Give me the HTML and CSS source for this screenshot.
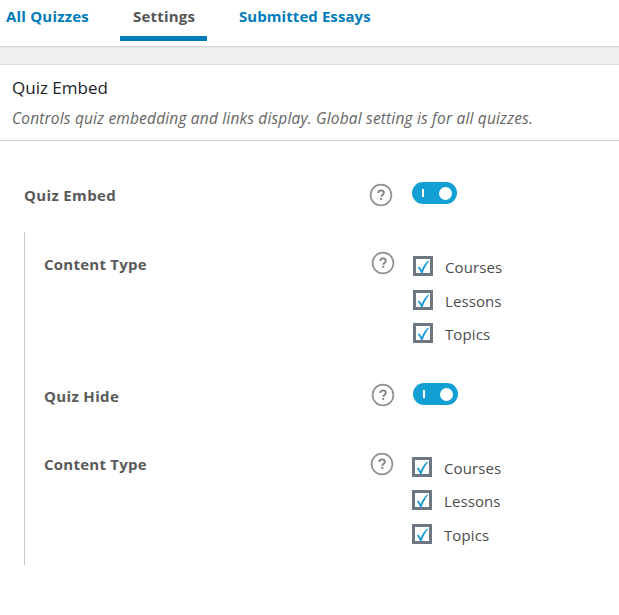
FILE: index.html
```html
<!DOCTYPE html>
<html lang="en">
<head>
<meta charset="utf-8">
<title>Quiz Settings</title>
<link rel="stylesheet" href="styles.css">
</head>
<body>
<svg class="defs" width="0" height="0" aria-hidden="true">
  <symbol id="help" viewBox="0 0 24 24">
    <circle cx="12" cy="12" r="10.400" fill="none" stroke="#929292" stroke-width="1.700"/>
    <path d="M9.300 10C9.300 8.300 10.400 7.400 12 7.400s2.800 1 2.800 2.500c0 1.900-2.600 2.100-2.600 3.900" fill="none" stroke="#858585" stroke-width="1.900"/>
    <rect x="11.200" y="14.900" width="2" height="2" fill="#858585"/>
  </symbol>
  <symbol id="check" viewBox="0 0 20 20">
    <path d="M4.800 11.500l1.800-1 2 3.500C10.200 10.100 12.500 6.900 15 4.700h1.200C13.500 8.200 11.300 12.200 9.600 17H8.100C7.200 14.900 6.200 13.100 4.800 11.500z" fill="#1b9ad8"/>
  </symbol>
</svg>
<nav class="tabs">
  <a class="tab all"><span>All Quizzes</span></a>
  <a class="tab active"><span>Settings</span></a>
  <a class="tab essays"><span>Submitted Essays</span></a>
</nav>
<main class="panel">
  <header class="panel-head">
    <h2><span>Quiz Embed</span></h2>
    <p><span>Controls quiz embedding and links display. Global setting is for all quizzes.</span></p>
  </header>
  <section class="row main-row">
    <div class="label"><span>Quiz Embed</span></div>
    <svg class="help"><use href="#help"/></svg>
    <div class="toggle"><i></i><b></b></div>
  </section>
  <div class="group">
    <section class="row embed-types">
      <div class="label"><span>Content Type</span></div>
      <svg class="help"><use href="#help"/></svg>
      <div class="options">
        <label><svg class="box"><use href="#check"/></svg><span>Courses</span></label>
        <label><svg class="box"><use href="#check"/></svg><span>Lessons</span></label>
        <label><svg class="box"><use href="#check"/></svg><span>Topics</span></label>
      </div>
    </section>
    <section class="row hide-row">
      <div class="label"><span>Quiz Hide</span></div>
      <svg class="help"><use href="#help"/></svg>
      <div class="toggle"><i></i><b></b></div>
    </section>
    <section class="row hide-types">
      <div class="label"><span>Content Type</span></div>
      <svg class="help"><use href="#help"/></svg>
      <div class="options">
        <label><svg class="box"><use href="#check"/></svg><span>Courses</span></label>
        <label><svg class="box"><use href="#check"/></svg><span>Lessons</span></label>
        <label><svg class="box"><use href="#check"/></svg><span>Topics</span></label>
      </div>
    </section>
  </div>
</main>
</body>
</html>
```
FILE: styles.css
```css
* { box-sizing: border-box; }
body {
  margin: 0;
  height: 615px;
  overflow: hidden;
  background: #f0f0f0;
  color: #555;
  font-family: "Open Sans", "Noto Sans", sans-serif;
  font-size: 15px;
  line-height: 20px;
}
.defs { display: block; }
.tabs {
  display: flex;
  height: 47px;
  background: #fff;
  border-bottom: 1px solid #d5d5d5;
  box-shadow: 0 1px 1px rgba(0, 0, 0, .04);
}
.tab {
  height: 41px;
  padding-top: 6px;
  font-weight: 700;
  color: #007cba;
  white-space: nowrap;
}
.all { width: 120px; padding-left: 6px; letter-spacing: .2px; }
.active {
  width: 87px;
  padding-left: 13px;
  color: #555;
  letter-spacing: .2px;
  border-bottom: 5px solid #007cba;
}
.essays { padding-left: 32px; letter-spacing: .07px; }
.panel {
  margin-top: 17px;
  height: 551px;
  background: #fff;
  border-top: 1px solid #dcdcdc;
}
.panel-head {
  height: 76px;
  padding: 11px 12px 0;
  border-bottom: 1px solid #c9cbd0;
  white-space: nowrap;
}
h2 {
  margin: 0;
  height: 24px;
  font-size: 17px;
  line-height: 24px;
  font-weight: 500;
  color: #1d2327;
}
.panel-head p {
  margin: 8px 0 0;
  font-size: 15.5px;
  font-style: italic;
  line-height: 20px;
  letter-spacing: .17px;
  color: #666;
}
.row {
  display: grid;
  grid-template-columns: 326px 42px 1fr;
  align-items: start;
}
.label {
  margin-top: 3px;
  font-weight: 700;
  color: #5a5a5a;
  letter-spacing: .25px;
  white-space: nowrap;
}
.help { display: block; width: 24px; height: 24px; }
.main-row {
  height: 91px;
  padding: 41px 0 0 24px;
  grid-template-columns: 345px 43px 1fr;
}
.main-row .label { letter-spacing: .35px; }
.main-row .help { margin-top: 1px; }
.group {
  margin-left: 24px;
  height: 333px;
  padding-left: 19px;
  border-left: 1px solid #c9c9c9;
}
.embed-types { height: 151px; padding-top: 19px; }
.options { margin-top: 5px; }
.embed-types label:nth-child(2) { margin-bottom: 13px; }
.hide-row { height: 69px; }
.hide-row .label { letter-spacing: .35px; }
.embed-types .help, .hide-row .help { margin-left: 1px; }
.embed-types .options, .hide-row .toggle { margin-left: 1px; }
.hide-types .label { margin-top: 2px; }
.hide-types label:nth-child(1) { margin-bottom: 13px; }
.toggle {
  display: flex;
  justify-content: space-between;
  align-items: center;
  width: 45px;
  height: 22px;
  padding: 0 5px 0 10px;
  border-radius: 11px;
  background: #129fd3;
}
.toggle i { width: 2px; height: 8px; background: #fff; }
.toggle b { width: 13px; height: 13px; border-radius: 50%; background: #fff; }
.options label {
  display: flex;
  gap: 12px;
  height: 20px;
  margin-bottom: 14px;
}
.options span { padding-top: 1px; color: #4c4c4c; letter-spacing: .1px; }
.box {
  flex: none;
  width: 20px;
  height: 20px;
  background: #fff;
  box-shadow: inset 0 0 0 3px #6c7781;
}
```
